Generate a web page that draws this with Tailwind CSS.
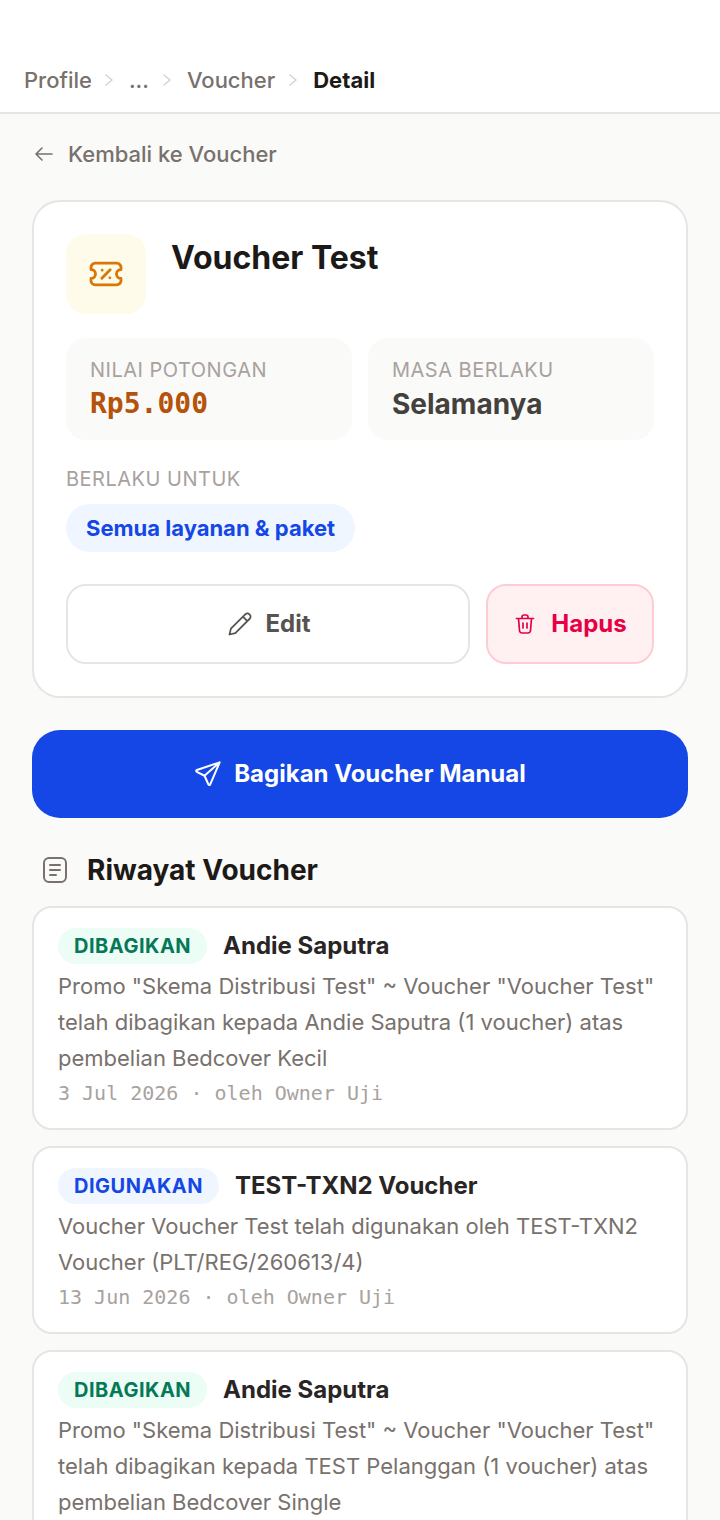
<!DOCTYPE html>
<html lang="id">

<head>
  <meta charset="UTF-8" />
  <meta name="viewport" content="width=device-width, initial-scale=1.0" />
  <title>Detail Voucher</title>
  <script src="https://cdn.jsdelivr.net/npm/@tailwindcss/browser@4"></script>
</head>

<body>
  <div class="h-[1520px] w-[720px] overflow-hidden bg-[#fafaf9] font-['Inter',sans-serif] [font-optical-sizing:none] text-[#1c1917]">
    <!-- breadcrumb -->
    <div class="h-[114px] bg-white border-b-2 border-[#e7e5e4] flex items-end pb-[15px] pl-[24px] text-[22px] leading-[34px] font-medium text-[#78716c]">
      <span>Profile</span>
      <svg class="w-[14px] h-[34px] ml-[11px] mr-[12px]" viewBox="0 0 14 34" fill="none" stroke="#d6d3d1" stroke-width="1.5" stroke-linecap="round" stroke-linejoin="round"><path d="M3 12l6 5-6 5" /></svg>
      <span>...</span>
      <svg class="w-[14px] h-[34px] ml-[12px] mr-[12px]" viewBox="0 0 14 34" fill="none" stroke="#d6d3d1" stroke-width="1.5" stroke-linecap="round" stroke-linejoin="round"><path d="M3 12l6 5-6 5" /></svg>
      <span>Voucher</span>
      <svg class="w-[14px] h-[34px] ml-[12px] mr-[12px]" viewBox="0 0 14 34" fill="none" stroke="#d6d3d1" stroke-width="1.5" stroke-linecap="round" stroke-linejoin="round"><path d="M3 12l6 5-6 5" /></svg>
      <span class="font-bold text-[#1c1917]">Detail</span>
    </div>

    <div class="px-[32px]">
      <!-- back link -->
      <div class="h-[86px] pb-[6px] flex items-center text-[22px] font-medium text-[#78716c]">
        <svg class="w-[24px] h-[24px] mr-[12px]" viewBox="0 0 24 24" fill="none" stroke="#78716c" stroke-width="1.6" stroke-linecap="round" stroke-linejoin="round"><path d="M20 12H4M10 6l-6 6 6 6" /></svg>
        <span>Kembali ke Voucher</span>
      </div>

      <!-- voucher card -->
      <div class="h-[498px] bg-white border-2 border-[#e7e5e4] rounded-[28px] p-[32px]">
        <div class="flex h-[80px]">
          <div class="w-[80px] h-[80px] rounded-[20px] bg-[#fffbeb] flex items-center justify-center">
            <svg class="w-[40px] h-[40px]" viewBox="0 0 24 24" fill="none" stroke="#d97706" stroke-width="1.7" stroke-linecap="round" stroke-linejoin="round">
              <path d="M5.500 5.500h13a2.500 2.500 0 0 1 2.500 2.500v1.300a2.700 2.700 0 0 0 0 5.400V16a2.500 2.500 0 0 1-2.500 2.500h-13A2.500 2.500 0 0 1 3 16v-1.300a2.700 2.700 0 0 0 0-5.400V8a2.500 2.500 0 0 1 2.500-2.500z" />
              <path d="M14.500 9.500l-5 5M9.700 9.700h.01M14.300 14.300h.01" />
            </svg>
          </div>
          <h1 class="ml-[25px] text-[32px] leading-[48px] font-bold">Voucher Test</h1>
        </div>

        <div class="mt-[24px] grid grid-cols-[286px_286px] gap-[16px]">
          <div class="h-[102px] rounded-[20px] bg-[#fafaf9] px-[24px] pt-[18px]">
            <p class="text-[20px] leading-[28px] tracking-[0.5px] text-[#a8a29e]">NILAI POTONGAN</p>
            <p class="mt-[2px] text-[28px] leading-[36px] font-bold text-[#b45309] font-['DejaVu_Sans_Mono',monospace]">Rp5.000</p>
          </div>
          <div class="h-[102px] rounded-[20px] bg-[#fafaf9] px-[24px] pt-[18px]">
            <p class="text-[20px] leading-[28px] tracking-[0.5px] text-[#a8a29e]">MASA BERLAKU</p>
            <p class="mt-[2px] text-[28px] leading-[36px] font-bold text-[#44403c]">Selamanya</p>
          </div>
        </div>

        <p class="mt-[25px] text-[20px] leading-[28px] tracking-[0.5px] text-[#a8a29e]">BERLAKU UNTUK</p>
        <span class="mt-[11px] inline-block h-[48px] rounded-full bg-[#eff6ff] px-[20px] text-[22px] leading-[48px] font-bold text-[#1447e6]">Semua layanan &amp; paket</span>

        <div class="mt-[32px] flex gap-[16px]">
          <button class="w-[404px] h-[80px] rounded-[20px] border-2 border-[#e7e5e4] bg-white flex items-center justify-center gap-[12px] text-[24px] font-bold text-[#57534e]">
            <svg class="w-[28px] h-[28px]" viewBox="0 0 24 24" fill="none" stroke="#57534e" stroke-width="1.500" stroke-linecap="round" stroke-linejoin="round"><path d="M3 21l1.200-5L16.500 3.700a2.500 2.500 0 0 1 3.600 0l.2.2a2.500 2.500 0 0 1 0 3.600L8 19.800 3 21zM14.500 5.700l3.800 3.800" /></svg>
            Edit
          </button>
          <button class="w-[168px] h-[80px] rounded-[20px] border-2 border-[#fecdd3] bg-[#fff1f2] flex items-center justify-center gap-[14px] text-[24px] font-bold text-[#e60045]">
            <svg class="w-[24px] h-[24px]" viewBox="0 0 24 24" fill="none" stroke="#e60045" stroke-width="1.700" stroke-linecap="round" stroke-linejoin="round"><path d="M3.500 6.500h17M9 6.500V5a2 2 0 0 1 2-2h2a2 2 0 0 1 2 2v1.500M5.500 6.500l1 12a2.500 2.500 0 0 0 2.500 2.500h6a2.500 2.500 0 0 0 2.500-2.500l1-12M10 11v5M14 11v5" /></svg>
            Hapus
          </button>
        </div>
      </div>

      <!-- share button -->
      <button class="mt-[32px] w-full h-[88px] rounded-[28px] bg-[#1447e6] flex items-center justify-center gap-[12px] text-[24px] font-bold text-white">
        <svg class="w-[28px] h-[28px]" viewBox="0 0 24 24" fill="none" stroke="#ffffff" stroke-width="1.700" stroke-linecap="round" stroke-linejoin="round"><path d="M22 2L2.500 8.600a.8.800 0 0 0-.1 1.500l6.600 3.400 3.400 7.500a.8.800 0 0 0 1.500-.1L22 2zM9 13.500L22 2" /></svg>
        Bagikan Voucher Manual
      </button>

      <!-- history -->
      <div class="mt-[32px] h-[40px] flex items-center">
        <svg class="w-[28px] h-[28px] ml-[9px] mr-[18px]" viewBox="0 0 28 28" fill="none" stroke="#78716c" stroke-width="2" stroke-linecap="round" stroke-linejoin="round"><rect x="3" y="2" width="22" height="24" rx="5" /><path d="M9 9h10M9 14h10M9 19h6" /></svg>
        <h2 class="text-[28px] leading-[40px] font-bold">Riwayat Voucher</h2>
      </div>

      <div class="mt-[16px] flex flex-col gap-[16px]">
        <div class="bg-white border-2 border-[#e7e5e4] rounded-[20px] px-[24px] pt-[20px] pb-[20px]">
          <div class="flex items-center h-[36px] gap-[16px]">
            <span class="h-[36px] rounded-full bg-[#ecfdf5] px-[16px] text-[20px] leading-[36px] font-bold tracking-[0.5px] text-[#047857]">DIBAGIKAN</span>
            <span class="text-[24px] font-bold text-[#292524]">Andie Saputra</span>
          </div>
          <p class="mt-[4px] text-[22px] leading-[36px] text-[#78716c]">Promo "Skema Distribusi Test" ~ Voucher "Voucher Test" telah dibagikan kepada Andie Saputra (1 voucher) atas pembelian Bedcover Kecil</p>
          <p class="mt-[2px] text-[20px] leading-[30px] text-[#a8a29e] font-['DejaVu_Sans_Mono',monospace]">3 Jul 2026 · oleh Owner Uji</p>
        </div>

        <div class="bg-white border-2 border-[#e7e5e4] rounded-[20px] px-[24px] pt-[20px] pb-[20px]">
          <div class="flex items-center h-[36px] gap-[16px]">
            <span class="h-[36px] rounded-full bg-[#eff6ff] px-[16px] text-[20px] leading-[36px] font-bold tracking-[0.5px] text-[#1447e6]">DIGUNAKAN</span>
            <span class="text-[24px] font-bold text-[#292524]">TEST-TXN2 Voucher</span>
          </div>
          <p class="mt-[4px] text-[22px] leading-[36px] text-[#78716c]">Voucher Voucher Test telah digunakan oleh TEST-TXN2 Voucher (PLT/REG/260613/4)</p>
          <p class="mt-[2px] text-[20px] leading-[30px] text-[#a8a29e] font-['DejaVu_Sans_Mono',monospace]">13 Jun 2026 · oleh Owner Uji</p>
        </div>

        <div class="bg-white border-2 border-[#e7e5e4] rounded-[20px] px-[24px] pt-[20px] pb-[20px]">
          <div class="flex items-center h-[36px] gap-[16px]">
            <span class="h-[36px] rounded-full bg-[#ecfdf5] px-[16px] text-[20px] leading-[36px] font-bold tracking-[0.5px] text-[#047857]">DIBAGIKAN</span>
            <span class="text-[24px] font-bold text-[#292524]">Andie Saputra</span>
          </div>
          <p class="mt-[4px] text-[22px] leading-[36px] text-[#78716c]">Promo "Skema Distribusi Test" ~ Voucher "Voucher Test" telah dibagikan kepada TEST Pelanggan (1 voucher) atas pembelian Bedcover Single</p>
        </div>
      </div>
    </div>
  </div>
</body>

</html>
